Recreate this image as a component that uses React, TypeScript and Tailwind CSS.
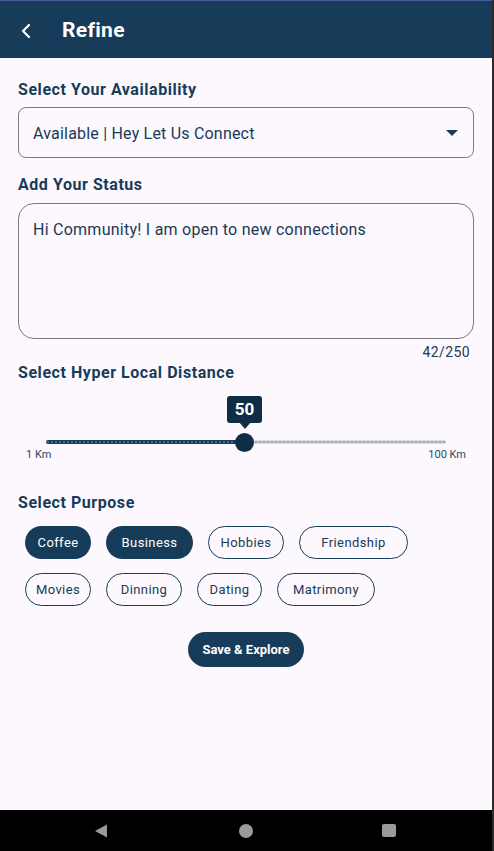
import { ChevronLeft } from "lucide-react";

const purposes = [
  { label: "Coffee", w: "w-[66px]", active: true },
  { label: "Business", w: "w-[87px]", active: true },
  { label: "Hobbies", w: "w-[76px]", active: false },
  { label: "Friendship", w: "w-[109px]", active: false },
  { label: "Movies", w: "w-[66px]", active: false },
  { label: "Dinning", w: "w-[76px]", active: false },
  { label: "Dating", w: "w-[65px]", active: false },
  { label: "Matrimony", w: "w-[98px]", active: false },
];

const Track = () => {
  const dots = [];
  for (let x = 2; x < 400; x += 4) {
    dots.push(
      <circle key={x} cx={x} cy={2} r={0.8} fill={x < 198 ? "#8fa3b3" : "#7d8a95"} />
    );
  }
  return (
    <svg width="400" height="4" viewBox="0 0 400 4" className="block">
      <rect x="0" y="0" width="198" height="4" rx="2" fill="#163c59" />
      <rect x="198" y="0.5" width="202" height="3" rx="1.5" fill="#b9c2cb" />
      {dots}
    </svg>
  );
};

export default function App() {
  return (
    <div
      className="flex h-[851px] w-[494px] flex-col overflow-hidden border-r-2 border-[#2b2b2b] bg-[#fcf8fd] text-[#163c59]"
      style={{ fontFamily: "Roboto, 'Noto Sans', sans-serif" }}
    >
      <header className="flex h-[58px] shrink-0 items-center border-t border-[#4b5a9a] bg-[#163c59] pt-[2px] text-white">
        <ChevronLeft className="ml-[14px] h-[24px] w-[24px]" strokeWidth={2.2} />
        <h1 className="ml-[24px] text-[21px] font-bold tracking-[0.3px]">Refine</h1>
      </header>

      <main className="flex-1 px-[18px]">
        <h2 className="mt-[22px] text-[16px] font-bold leading-[20px] tracking-[0.55px]">
          Select Your Availability
        </h2>
        <div className="mt-[7px] flex h-[51px] items-center justify-between rounded-[8px] border border-[#7b7b80] pl-[14px] pr-[15px] pt-[2px]">
          <span className="text-[16px] tracking-[0.2px] text-[#1a3a55]">Available | Hey Let Us Connect</span>
          <svg width="12" height="7" viewBox="0 0 12 7">
            <path d="M0 0 L12 0 L6 6 Z" fill="#163c59" />
          </svg>
        </div>

        <h2 className="mt-[17px] text-[16px] font-bold leading-[20px] tracking-[0.55px]">
          Add Your Status
        </h2>
        <div className="mt-[8px] h-[136px] rounded-[16px] border border-[#7b7b80] px-[14px] pt-[16px]">
          <p className="text-[16px] leading-[20px] tracking-[0.25px] text-[#1a3a55]">
            Hi Community! I am open to new connections
          </p>
        </div>
        <div className="mt-[4px] pr-[4px] text-right text-[14px] leading-[18px] tracking-[0.4px] text-[#1a3a55]">
          42/250
        </div>

        <h2 className="mt-[2px] text-[16px] font-bold leading-[20px] tracking-[0.55px]">
          Select Hyper Local Distance
        </h2>

        <div className="relative mt-[13px] h-[70px]">
          <div className="absolute left-[209px] top-0 flex flex-col items-center">
            <div className="flex h-[27px] w-[35px] items-center justify-center rounded-[3px] bg-[#0f2e45] text-[17px] font-bold text-white">
              50
            </div>
            <svg width="12" height="7" viewBox="0 0 12 7" className="-mt-px">
              <path d="M0 0 L12 0 L6 7 Z" fill="#0f2e45" />
            </svg>
          </div>
          <div className="absolute left-[28px] top-[44px]">
            <Track />
          </div>
          <div className="absolute left-[217px] top-[37px] h-[19px] w-[19px] rounded-full bg-[#0f2e45]" />
          <div className="absolute left-[8px] top-[51px] text-[11px] text-[#2c4a63]">1 Km</div>
          <div className="absolute right-[8px] top-[51px] text-[11px] text-[#2c4a63]">100 Km</div>
        </div>

        <h2 className="mt-[27px] text-[16px] font-bold leading-[20px] tracking-[0.55px]">
          Select Purpose
        </h2>
        <div className="mt-[13px] flex flex-wrap gap-x-[15px] gap-y-[14px] pl-[7px]">
          {purposes.map((p) => (
            <span
              key={p.label}
              className={`flex h-[33px] items-center justify-center rounded-full text-[13px] tracking-[0.4px] ${p.w} ${
                p.active
                  ? "bg-[#163c59] text-white"
                  : "border border-[#163c59] text-[#1a3a55]"
              }`}
            >
              {p.label}
            </span>
          ))}
        </div>

        <div className="mt-[26px] flex justify-center">
          <button className="h-[35px] w-[116px] rounded-full bg-[#163c59] text-[13px] font-bold text-white">
            Save &amp; Explore
          </button>
        </div>
      </main>

      <nav className="flex h-[41px] shrink-0 items-center bg-black">
        <svg width="14" height="14" viewBox="0 0 14 14" className="ml-[94px]">
          <path d="M1 7 L13 0.5 L13 13.5 Z" fill="#9a9a9a" />
        </svg>
        <div className="ml-[131px] h-[14px] w-[14px] rounded-full bg-[#9a9a9a]" />
        <div className="ml-[129px] h-[13px] w-[14px] rounded-[2px] bg-[#9a9a9a]" />
      </nav>
    </div>
  );
}
